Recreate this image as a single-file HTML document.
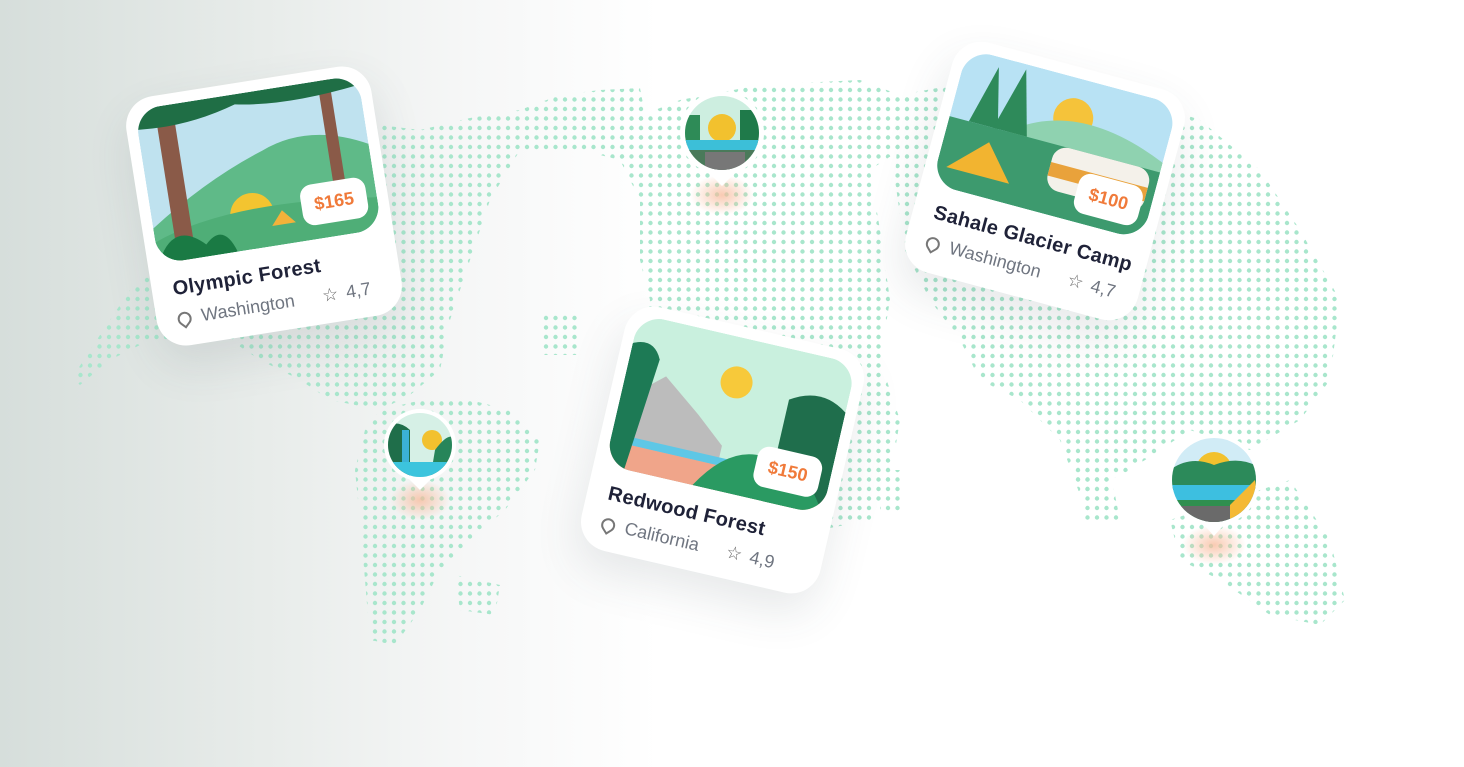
<!DOCTYPE html>
<html><head><meta charset="utf-8">
<style>
html,body{margin:0;padding:0}
body{width:1464px;height:767px;overflow:hidden;position:relative;font-family:"Liberation Sans",sans-serif;
background:linear-gradient(90deg,#d6dedb 0%,#e8ecea 18%,#f6f7f7 32%,#ffffff 45%,#fff 100%);}
.map{position:absolute;left:0;top:0}
.card{position:absolute;background:#fff;border-radius:30px;box-shadow:0 20px 45px rgba(60,70,80,.12);box-sizing:border-box;padding:11px}
.img{border-radius:26px;overflow:hidden;position:relative}
.img svg{display:block}
.price{position:absolute;right:10px;bottom:14px;background:#fff;border-radius:12px;color:#f07a3a;font-weight:bold;font-size:18px;padding:10px 13px}
.title{font-weight:bold;color:#1f2238;font-size:20px;margin:16px 0 0 10px;letter-spacing:.3px}
.sub{color:#6f7580;font-size:18px;margin:8px 0 0 10px;display:flex;align-items:center}
.sub .pin{width:10px;height:10px;border:2px solid #777;border-radius:50% 50% 50% 0;transform:rotate(-45deg);margin-right:10px;position:relative}
.sub .star{margin-left:28px;margin-right:8px;font-size:18px;color:#666}
</style></head><body>

<svg class="map" width="1464" height="767">
<defs>
<pattern id="d" width="9.5" height="9.5" patternUnits="userSpaceOnUse"><circle cx="4.5" cy="4.5" r="2.2" fill="#a8e6cc"/></pattern>
<radialGradient id="g"><stop offset="0" stop-color="#f7b999" stop-opacity=".75"/><stop offset="1" stop-color="#f7b999" stop-opacity="0"/></radialGradient>
<clipPath id="c1"><circle cx="722" cy="133" r="37"/></clipPath>
<clipPath id="c2"><circle cx="420" cy="445" r="32"/></clipPath>
<clipPath id="c3"><circle cx="1214" cy="480" r="42"/></clipPath>
</defs>
<g fill="url(#d)">
<polygon points="72,378 100,335 130,290 150,275 175,300 200,280 240,230 260,190 300,150 380,125 420,130 470,118 520,110 560,95 600,90 640,88 650,140 620,160 580,150 520,150 490,200 470,260 450,320 440,370 410,395 380,410 330,400 300,380 260,360 230,340 190,345 150,340 110,360 80,385"/>
<polygon points="380,410 430,398 470,400 510,410 540,440 535,470 505,510 470,540 440,570 420,610 395,645 370,640 365,580 360,520 355,470 365,430"/>
<polygon points="455,575 500,585 495,615 460,610"/>
<polygon points="630,120 680,100 760,85 860,80 900,95 900,150 870,170 880,230 890,300 880,360 900,420 890,480 870,520 820,530 780,520 740,470 700,430 660,400 640,340 650,300 640,260 640,200 620,160"/>
<polygon points="900,95 980,80 1100,85 1200,120 1260,170 1300,230 1340,300 1330,380 1300,420 1250,450 1190,430 1130,470 1080,495 1060,440 1020,400 980,380 960,340 930,300 905,250 895,180"/>
<polygon points="1170,520 1230,500 1290,480 1330,540 1345,600 1320,625 1270,615 1220,580 1180,560"/>
<polygon points="1075,470 1110,470 1120,520 1085,520"/>
<polygon points="880,470 900,470 900,515 880,515"/>
<polygon points="540,315 580,315 580,355 540,355"/>
</g>
<ellipse cx="722" cy="195" rx="32" ry="20" fill="url(#g)"/>
<ellipse cx="420" cy="500" rx="30" ry="20" fill="url(#g)"/>
<ellipse cx="1214" cy="545" rx="32" ry="20" fill="url(#g)"/>
<circle cx="722" cy="133" r="42" fill="#fff"/><polygon points="704,168 740,168 722,186" fill="#fff"/>
<circle cx="420" cy="445" r="36" fill="#fff"/><polygon points="404,474 436,474 420,490" fill="#fff"/>
<circle cx="1214" cy="480" r="46" fill="#fff"/><polygon points="1196,516 1232,516 1214,536" fill="#fff"/>
<g clip-path="url(#c1)"><rect x="680" y="90" width="90" height="90" fill="#cdeee0"/><circle cx="722" cy="128" r="14" fill="#f2c12e"/><rect x="680" y="115" width="20" height="30" fill="#2e8b57"/><rect x="740" y="110" width="30" height="35" fill="#1f7a4a"/><rect x="680" y="140" width="90" height="12" fill="#3cbfd8"/><rect x="680" y="150" width="90" height="30" fill="#4a7a5a"/><rect x="705" y="152" width="40" height="20" fill="#777"/></g>
<g clip-path="url(#c2)"><rect x="385" y="410" width="70" height="70" fill="#d6f0e6"/><circle cx="432" cy="440" r="10" fill="#f2c12e"/><path d="M385 425 Q400 420 410 430 L410 480 L385 480Z" fill="#1f6e4a"/><path d="M435 450 Q450 430 455 440 L455 480 L430 480Z" fill="#27855a"/><rect x="402" y="430" width="7" height="40" fill="#3bb2d6"/><rect x="385" y="462" width="70" height="15" fill="#3cc4dd"/></g>
<g clip-path="url(#c3)"><rect x="1170" y="436" width="90" height="90" fill="#d1ecf6"/><circle cx="1214" cy="470" r="18" fill="#f2c12e"/><path d="M1170 470 Q1190 455 1214 465 Q1240 455 1260 468 L1260 490 L1170 490Z" fill="#2c8a5a"/><rect x="1170" y="485" width="90" height="20" fill="#3dbfe0"/><rect x="1170" y="500" width="90" height="30" fill="#2f8f4f"/><polygon points="1230,505 1255,480 1260,520 1230,520" fill="#f4b934"/><rect x="1180" y="506" width="50" height="20" fill="#6a6a6a"/></g>
</svg>

<div class="card" style="left:140px;top:80px;width:248px;height:252px;transform:rotate(-9deg)">
 <div class="img" style="height:156px">
  <svg width="226" height="156"><rect width="226" height="156" fill="#bfe2ef"/><path d="M0 120 Q60 80 120 60 Q170 40 226 70 L226 156 L0 156Z" fill="#5fba88"/><circle cx="100" cy="122" r="22" fill="#f3c430"/><path d="M0 134 Q80 104 226 124 L226 156 L0 156Z" fill="#4fae77"/><rect x="20" y="20" width="18" height="136" fill="#8a5a48"/><rect x="185" y="0" width="12" height="110" fill="#8a5a48"/><path d="M0 0 H226 V10 Q150 20 100 10 Q50 25 0 20Z" fill="#1f6e45"/><path d="M0 156 Q20 114 50 144 Q70 124 80 156Z" fill="#1a7a44"/><polygon points="118,136 130,122 142,136" fill="#f3b23a"/></svg>
  <div class="price">$165</div>
 </div>
 <div class="title">Olympic Forest</div>
 <div class="sub"><span class="pin"></span>Washington<span class="star">☆</span>4,7</div>
</div>

<div class="card" style="left:600px;top:325px;width:245px;height:250px;transform:rotate(13deg)">
 <div class="img" style="height:155px">
  <svg width="223" height="155"><rect width="223" height="155" fill="#c9f0de"/><circle cx="110" cy="45" r="16" fill="#f7c93a"/><polygon points="0,90 40,55 80,85 110,110 110,155 0,155" fill="#bcbcbc"/><rect x="0" y="122" width="223" height="8" fill="#5ec7e6"/><rect x="0" y="130" width="223" height="25" fill="#f0a58a"/><path d="M0 30 Q20 20 30 40 L20 155 L0 155Z" fill="#1d7a55"/><path d="M165 50 Q195 30 223 50 L223 145 L165 145Z" fill="#1f6e4c"/><path d="M90 155 Q120 104 160 112 Q200 112 223 155Z" fill="#2a9a62"/></svg>
  <div class="price">$150</div>
 </div>
 <div class="title">Redwood Forest</div>
 <div class="sub"><span class="pin"></span>California<span class="star">☆</span>4,9</div>
</div>

<div class="card" style="left:925px;top:62px;width:240px;height:238px;transform:rotate(15deg)">
 <div class="img" style="height:140px">
  <svg width="218" height="140"><rect width="218" height="140" fill="#b8e2f4"/><circle cx="120" cy="40" r="20" fill="#f5c33a"/><path d="M60 70 Q120 20 218 60 L218 140 L60 140Z" fill="#8fd2b0"/><rect x="0" y="70" width="218" height="70" fill="#3d9a6e"/><polygon points="20,70 35,10 50,70" fill="#2e8a5a"/><polygon points="45,70 62,5 80,70" fill="#2e8a5a"/><polygon points="10,120 45,85 75,120" fill="#f2b430"/><rect x="110" y="70" width="100" height="45" rx="14" fill="#f4f1ea"/><rect x="110" y="88" width="100" height="14" fill="#e9a23b"/></svg>
  <div class="price" style="bottom:10px">$100</div>
 </div>
 <div class="title">Sahale Glacier Camp</div>
 <div class="sub"><span class="pin"></span>Washington<span class="star">☆</span>4,7</div>
</div>
</body></html>
